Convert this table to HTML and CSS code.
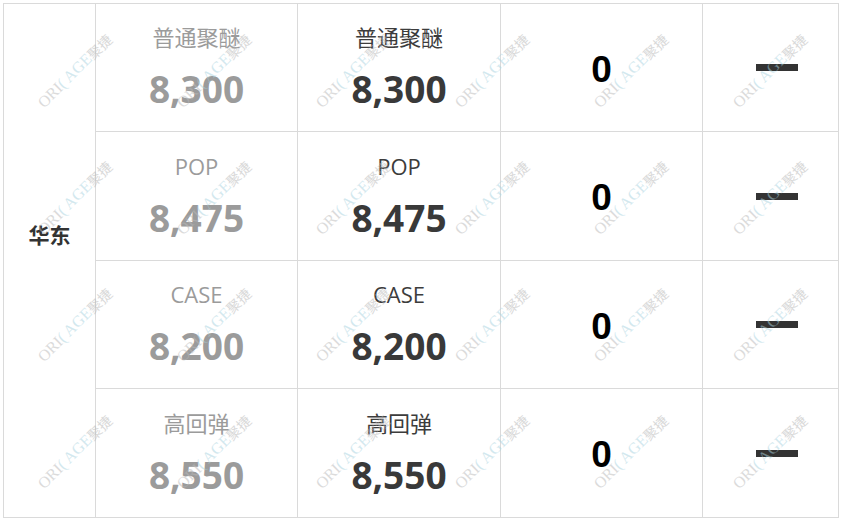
FILE: index.html
```html
<!DOCTYPE html>
<html lang="zh">
<head>
<meta charset="utf-8">
<link rel="stylesheet" href="styles.css">
</head>
<body>
<div class="page">
  <div class="table">
    <div class="cell region"><span>华东</span></div>

    <div class="cell item muted"><div class="label">普通聚醚</div><div class="num">8,300</div></div>
    <div class="cell item dark"><div class="label">普通聚醚</div><div class="num">8,300</div></div>
    <div class="cell zero">0</div>
    <div class="cell dash"><span class="bar"></span></div>

    <div class="cell item muted"><div class="label">POP</div><div class="num">8,475</div></div>
    <div class="cell item dark"><div class="label">POP</div><div class="num">8,475</div></div>
    <div class="cell zero">0</div>
    <div class="cell dash"><span class="bar"></span></div>

    <div class="cell item muted"><div class="label">CASE</div><div class="num">8,200</div></div>
    <div class="cell item dark"><div class="label">CASE</div><div class="num">8,200</div></div>
    <div class="cell zero">0</div>
    <div class="cell dash"><span class="bar"></span></div>

    <div class="cell item muted"><div class="label">高回弹</div><div class="num">8,550</div></div>
    <div class="cell item dark"><div class="label">高回弹</div><div class="num">8,550</div></div>
    <div class="cell zero">0</div>
    <div class="cell dash"><span class="bar"></span></div>
  </div>

  <div class="watermarks" aria-hidden="true">
    <div class="wm"><span class="o">ORI</span><span class="a">( AGE</span><span class="c">聚捷</span></div>
    <div class="wm"><span class="o">ORI</span><span class="a">( AGE</span><span class="c">聚捷</span></div>
    <div class="wm"><span class="o">ORI</span><span class="a">( AGE</span><span class="c">聚捷</span></div>
    <div class="wm"><span class="o">ORI</span><span class="a">( AGE</span><span class="c">聚捷</span></div>
    <div class="wm"><span class="o">ORI</span><span class="a">( AGE</span><span class="c">聚捷</span></div>
    <div class="wm"><span class="o">ORI</span><span class="a">( AGE</span><span class="c">聚捷</span></div>
    <div class="wm"><span class="o">ORI</span><span class="a">( AGE</span><span class="c">聚捷</span></div>
    <div class="wm"><span class="o">ORI</span><span class="a">( AGE</span><span class="c">聚捷</span></div>
    <div class="wm"><span class="o">ORI</span><span class="a">( AGE</span><span class="c">聚捷</span></div>
    <div class="wm"><span class="o">ORI</span><span class="a">( AGE</span><span class="c">聚捷</span></div>
    <div class="wm"><span class="o">ORI</span><span class="a">( AGE</span><span class="c">聚捷</span></div>
    <div class="wm"><span class="o">ORI</span><span class="a">( AGE</span><span class="c">聚捷</span></div>
    <div class="wm"><span class="o">ORI</span><span class="a">( AGE</span><span class="c">聚捷</span></div>
    <div class="wm"><span class="o">ORI</span><span class="a">( AGE</span><span class="c">聚捷</span></div>
    <div class="wm"><span class="o">ORI</span><span class="a">( AGE</span><span class="c">聚捷</span></div>
    <div class="wm"><span class="o">ORI</span><span class="a">( AGE</span><span class="c">聚捷</span></div>
    <div class="wm"><span class="o">ORI</span><span class="a">( AGE</span><span class="c">聚捷</span></div>
    <div class="wm"><span class="o">ORI</span><span class="a">( AGE</span><span class="c">聚捷</span></div>
    <div class="wm"><span class="o">ORI</span><span class="a">( AGE</span><span class="c">聚捷</span></div>
    <div class="wm"><span class="o">ORI</span><span class="a">( AGE</span><span class="c">聚捷</span></div>
    <div class="wm"><span class="o">ORI</span><span class="a">( AGE</span><span class="c">聚捷</span></div>
    <div class="wm"><span class="o">ORI</span><span class="a">( AGE</span><span class="c">聚捷</span></div>
    <div class="wm"><span class="o">ORI</span><span class="a">( AGE</span><span class="c">聚捷</span></div>
    <div class="wm"><span class="o">ORI</span><span class="a">( AGE</span><span class="c">聚捷</span></div>
  </div>
</div>
</body>
</html>
```

FILE: styles.css
```css
html, body {
  margin: 0;
  padding: 0;
  background: #ffffff;
}

body {
  width: 843px;
  height: 521px;
  overflow: hidden;
  font-family: "Open Sans", "Noto Sans CJK SC", sans-serif;
}

.page {
  position: relative;
  padding: 3px 0 0 3px;
}

.table {
  display: grid;
  grid-template-columns: 91px 201px 202px 201px 135px;
  grid-template-rows: 127px 128px 127px 128px;
  gap: 1px;
  padding: 1px;
  width: max-content;
  background: #dadada;
}

.cell {
  background: #ffffff;
  display: flex;
  align-items: center;
  justify-content: center;
}

.region {
  grid-row: 1 / span 4;
  padding-bottom: 54px;
  font-family: "Noto Sans CJK SC", sans-serif;
  font-weight: 700;
  font-size: 21px;
  color: #333333;
}

.item {
  flex-direction: column;
  padding-bottom: 2px;
}

.label {
  font-family: "Open Sans", "Noto Sans CJK SC", sans-serif;
  font-size: 22px;
  line-height: 30px;
  height: 30px;
}

.num {
  font-family: "Open Sans", sans-serif;
  font-weight: 700;
  font-size: 37px;
  line-height: 44px;
  margin-top: 15px;
}

.muted .label,
.muted .num {
  color: #9b9b9b;
}

.dark .label {
  color: #3c3c3c;
}

.dark .num {
  color: #393939;
}

.zero {
  font-family: "Liberation Sans", Arial, sans-serif;
  font-weight: 700;
  font-size: 37px;
  color: #000000;
  padding-top: 4px;
}

.bar {
  display: block;
  width: 42px;
  height: 7px;
  margin-left: 12px;
  background: #333333;
}

.watermarks {
  position: absolute;
  left: 5px;
  top: 7px;
  display: grid;
  grid-template-columns: repeat(6, 139px);
  grid-template-rows: repeat(4, 127px);
  pointer-events: none;
}

.wm {
  display: flex;
  align-items: center;
  justify-content: center;
  transform: rotate(-45deg);
  font-family: "Liberation Serif", "Noto Sans CJK SC", serif;
  font-size: 16px;
  white-space: nowrap;
  opacity: 0.5;
}

.wm .o {
  color: #b9b9b9;
}

.wm .a {
  color: #a9d3df;
}

.wm .c {
  color: #b5b5b5;
  font-family: "Noto Sans CJK SC", sans-serif;
  font-size: 14px;
}
```
